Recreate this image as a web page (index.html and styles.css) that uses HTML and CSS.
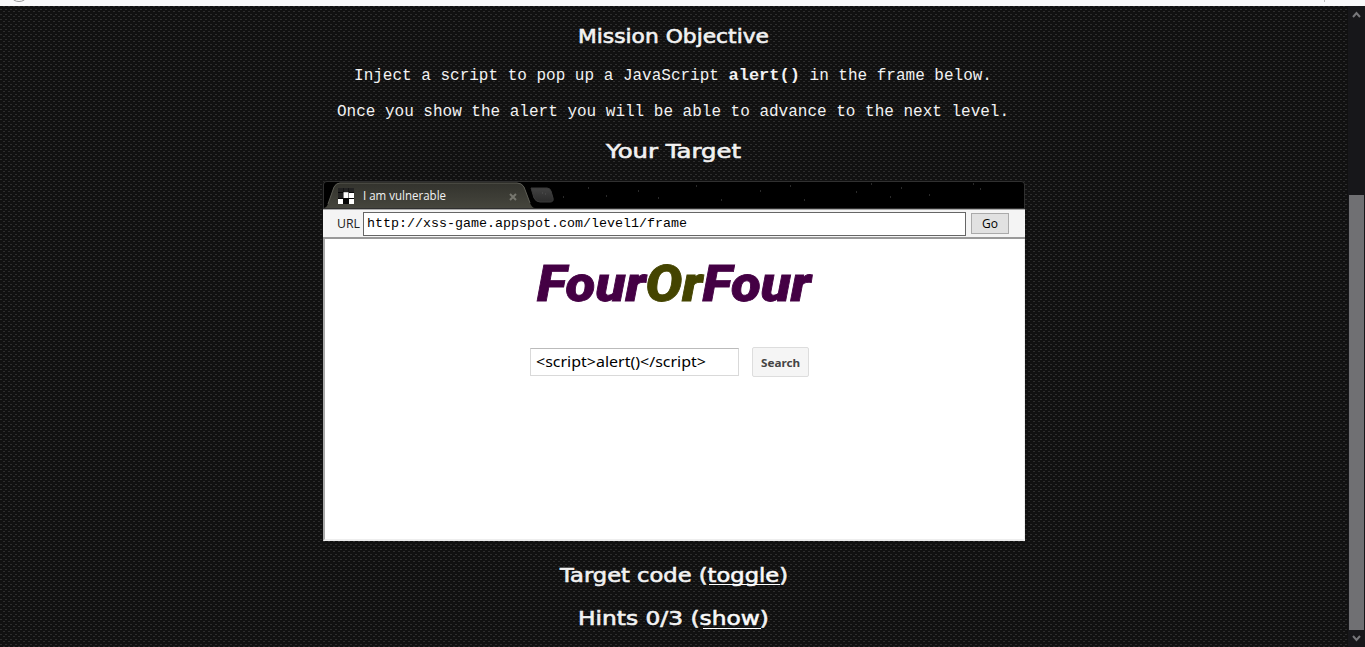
FILE: index.html
```html
<!DOCTYPE html>
<html lang="en"><head><meta charset="utf-8"><title>XSS game</title><link rel="stylesheet" href="styles.css"></head>
<body>
<header class="topbar"><svg width="1365" height="6"><ellipse cx="19" cy="-3" rx="7" ry="4.500" fill="none" stroke="#999"/><path d="M1324.500 0v2" stroke="#bbb"/></svg></header>
<div class="viewport">
<main class="page">
<svg class="heading h1" width="220" height="32"><text x="14" y="21" textLength="191" lengthAdjust="spacingAndGlyphs">Mission Objective</text></svg>
<p class="copy first">Inject a script to pop up a JavaScript <b>alert()</b> in the frame below.</p>
<p class="copy second">Once you show the alert you will be able to advance to the next level.</p>
<svg class="heading h2" width="220" height="32"><text x="42" y="21" textLength="135" lengthAdjust="spacingAndGlyphs">Your Target</text></svg>
<section class="browser">
<div class="tabs">
<svg width="702" height="28">
<defs><linearGradient id="tab" x2="0" y2="1"><stop stop-color="#33332d"/><stop offset="1" stop-color="#45453d"/></linearGradient><linearGradient id="plus" x2="0" y2="1"><stop stop-color="#424242"/><stop offset="1" stop-color="#2c2c2c"/></linearGradient></defs>
<path d="M1 27Q4 26 5 23L11 6Q13 2 17 2H194Q199 2 201 6L207 22Q209 27 212 27Z" fill="url(#tab)"/>
<path d="M5 23L11 6Q13 2 17 2H194Q199 2 201 6L207 22" fill="none" stroke="#5e5e56"/>
<path d="M208 7H224Q227 7 228 10L230 17Q231 21 227 21H217Q213 21 211 17Z" fill="url(#plus)" stroke="#3b3b3b"/>
<path d="M15 7h16v16H15Z" fill="#080808"/><path d="M20.500 12h5v5h-5zM26 12h5v5h-5zM15 18h5v5h-5zM26 18h5v5h-5z" fill="#fff"/><path d="M15 7h5v4h-5zM20.500 7h5v4h-5zM26 7h5v4h-5zM15 12h5v5h-5z" fill="#242424"/><path d="M20.500 11h5v1h-5z" fill="#ccc"/>
<text class="tab-title" x="40" y="19" textLength="83" lengthAdjust="spacingAndGlyphs">I am vulnerable</text>
<path d="M187 13l6 6m0-6l-6 6" stroke="#77776f" stroke-width="2"/>
<path d="M219 12h1m2 1h1M240 16h1m24-9h1m17 8h1m31-5h1m19 7h1m37-12h1m24 14h1m38-9h1m29-5h1m13 14h1m51-8h1m14-8h1m18 13h1m10-9h1m27 7h1m43-11h1m6 5h1" stroke="#555"/>
</svg></div>
<div class="address"><svg class="url-label" width="26" height="22"><text x="1" y="16" textLength="23" lengthAdjust="spacingAndGlyphs">URL</text></svg><div class="url">http://xss-game.appspot.com/level1/frame</div><button class="go">Go</button></div>
<div class="frame">
<svg class="logo" width="300" height="60"><text x="12" y="45" textLength="274" lengthAdjust="spacingAndGlyphs">Four<tspan class="or">Or</tspan>Four</text></svg>
<div class="search"><div class="query"><svg width="190" height="25"><text x="5" y="18" textLength="170" lengthAdjust="spacingAndGlyphs">&lt;script&gt;alert()&lt;/script&gt;</text></svg></div><button class="submit"><svg width="55" height="27"><text x="8" y="18" textLength="39" lengthAdjust="spacingAndGlyphs">Search</text></svg></button></div>
</div>
</section>
<svg class="heading h3" width="250" height="32"><text x="11" y="21" textLength="228" lengthAdjust="spacingAndGlyphs">Target code (<tspan class="link">toggle</tspan>)</text><path class="underline" d="M160 23.500h71"/></svg>
<svg class="heading h4" width="250" height="32"><text x="29" y="21" textLength="191" lengthAdjust="spacingAndGlyphs">Hints 0/3 (<tspan class="link">show</tspan>)</text><path class="underline" d="M154 24.500h58"/></svg>
</main>
<aside class="scrollbar"><svg width="17" height="17"><path d="M5 11l3.500-4 3.500 4" /></svg><div class="thumb"></div><svg width="17" height="17"><path d="M5 6l3.500 4 3.500-4"/></svg></aside>
</div></body></html>
```
FILE: styles.css
```css
*{box-sizing:border-box}
body{margin:0;width:1365px;height:647px;overflow:hidden;background:#111}
svg{display:block}
.topbar{height:6px;background:#f9f9fa}
.viewport{display:flex;height:641px}
.page{width:1348px;display:flex;flex-direction:column;align-items:center;color:#f2f2f2;background-color:#111;background-image:conic-gradient(from 90deg at 3px 1px,transparent 75%,#2d2d2d 0),conic-gradient(from 90deg at 3px 1px,transparent 75%,#2d2d2d 0);background-size:5px 5px;background-position:0 0,2px 3px}
.heading{flex:none;font:500 19px "DejaVu Sans",sans-serif;fill:#f2f2f2;stroke:#f2f2f2;stroke-width:.6px;margin-left:-1px}
.h1{margin-top:16px}
.copy{margin:0;height:20px;line-height:20px;font-family:"Liberation Mono",monospace;font-size:16px;white-space:pre;margin-left:-2px}
.copy b{font-size:17px}
.first{margin-top:12px}
.second{margin-top:16px}
.h2{margin-top:15px}
.h3{margin-top:20px}
.h4{margin-top:11px}
.link{fill:#fff}
.underline{stroke:#fff;stroke-width:1px}
.browser{width:702px;height:360px;margin-top:12px;flex:none}
.tabs{height:28px;background:#000;border-radius:4px 4px 0 0;overflow:hidden;box-shadow:inset 0 0 0 1px #303030}
.tab-title{font:12px "Open Sans",sans-serif;fill:#f2f2f2}
.address{height:30px;display:flex;align-items:flex-start;background:#f4f4f4;border-top:1px solid #aaa;border-bottom:2px solid #999;padding:2px 16px 0 13px}
.url-label{font:12px "Open Sans",sans-serif;fill:#222}
.url{width:604px;height:24px;margin-left:1px;border:1px solid #666;background:#fff;color:#000;font:13.340px/22px "Liberation Mono",monospace;padding-left:3px}
.go{width:38px;height:21px;margin:1px 0 0 5px;padding:0;border:1px solid #aaa;background:#e1e1e1;font:12px "Open Sans",sans-serif;color:#000}
.frame{height:302px;border-left:2px solid #aaa;border-bottom:2px solid #eee;border-right:1px solid #eee;background:#fff;display:flex;flex-direction:column;align-items:center;padding-top:17px}
.logo{font:italic 900 50px Roboto,sans-serif;fill:#404;stroke:#404;stroke-width:.8px}
.or{fill:#440;stroke:#440}
.search{display:flex;margin-top:31px;margin-right:11px}
.query{width:209px;height:28px;margin-top:1px;border:1px solid #d9d9d9;border-top-color:#bbb;font:14px "Noto Sans",sans-serif}
.submit{width:57px;height:30px;margin-left:13px;padding:0;border:1px solid #ddd;border-radius:2px;background:#f5f5f5;fill:#444;font:bold 11px "Noto Sans",sans-serif}
.scrollbar{width:17px;background:#17171a;display:flex;flex-direction:column}
.scrollbar path{fill:none;stroke:#77777a;stroke-width:2}
.thumb{width:15px;height:435px;margin:172px 0 0 1px;background:#707073}
```
